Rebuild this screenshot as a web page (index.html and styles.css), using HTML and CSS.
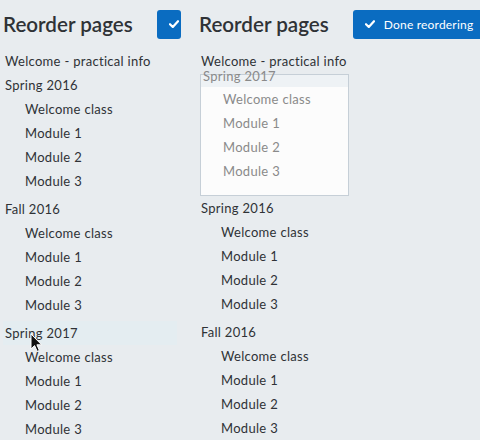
FILE: index.html
```html
<!DOCTYPE html>
<html lang="en">
<head>
<meta charset="utf-8">
<title>Reorder pages</title>
<link rel="stylesheet" href="styles.css">
</head>
<body>
<div class="stage">
  <section class="panel panel-left">
    <header class="bar">
      <h1 class="title">Reorder pages</h1>
      <button class="done" type="button"><svg class="check" viewBox="0 0 10 8" width="10" height="8" aria-hidden="true"><path d="M1 4.2 L3.8 7 L9 1.2" fill="none" stroke="#fff" stroke-width="2.2" stroke-linecap="round" stroke-linejoin="round"/></svg><span class="done-label">Done reordering</span></button>
    </header>
    <ul class="pages">
      <li class="page">Welcome - practical info</li>
      <li class="group">
        <div class="page">Spring 2016</div>
        <ul class="children">
          <li class="child">Welcome class</li>
          <li class="child">Module 1</li>
          <li class="child">Module 2</li>
          <li class="child">Module 3</li>
        </ul>
      </li>
      <li class="group">
        <div class="page">Fall 2016</div>
        <ul class="children">
          <li class="child">Welcome class</li>
          <li class="child">Module 1</li>
          <li class="child">Module 2</li>
          <li class="child">Module 3</li>
        </ul>
      </li>
      <li class="group">
        <div class="page is-hover">Spring 2017<svg class="cursor" viewBox="0 0 13 20" width="13" height="20" aria-hidden="true"><path d="M1 1 L1 16 L4.6 12.6 L7.2 18.4 L9.4 17.4 L6.9 11.8 L11.6 11.8 Z" fill="#111" stroke="#fff" stroke-width="1" stroke-linejoin="round"/></svg></div>
        <ul class="children">
          <li class="child">Welcome class</li>
          <li class="child">Module 1</li>
          <li class="child">Module 2</li>
          <li class="child">Module 3</li>
        </ul>
      </li>
    </ul>
  </section>

  <section class="panel panel-right">
    <header class="bar">
      <h1 class="title">Reorder pages</h1>
      <button class="done" type="button"><svg class="check" viewBox="0 0 10 8" width="10" height="8" aria-hidden="true"><path d="M1 4.2 L3.8 7 L9 1.2" fill="none" stroke="#fff" stroke-width="2.2" stroke-linecap="round" stroke-linejoin="round"/></svg><span class="done-label">Done reordering</span></button>
    </header>
    <ul class="pages">
      <li class="page">Welcome - practical info</li>
      <li class="group dragging">
        <div class="drag-head"><span class="drag-title">Spring 2017</span></div>
        <ul class="children">
          <li class="child">Welcome class</li>
          <li class="child">Module 1</li>
          <li class="child">Module 2</li>
          <li class="child">Module 3</li>
        </ul>
      </li>
      <li class="group">
        <div class="page">Spring 2016</div>
        <ul class="children">
          <li class="child">Welcome class</li>
          <li class="child">Module 1</li>
          <li class="child">Module 2</li>
          <li class="child">Module 3</li>
        </ul>
      </li>
      <li class="group">
        <div class="page">Fall 2016</div>
        <ul class="children">
          <li class="child">Welcome class</li>
          <li class="child">Module 1</li>
          <li class="child">Module 2</li>
          <li class="child">Module 3</li>
        </ul>
      </li>
    </ul>
  </section>
</div>
</body>
</html>
```
FILE: styles.css
```css
* { box-sizing: border-box; }

html, body {
  margin: 0;
  padding: 0;
  background: #e8ecef;
}

body {
  font-family: Lato, "Noto Sans", "DejaVu Sans", sans-serif;
  color: #2f3236;
  font-size: 13px;
  letter-spacing: 0.3px;
  width: 480px;
  height: 440px;
  overflow: hidden;
}

.stage {
  display: flex;
  gap: 15px;
  height: 440px;
}

.panel {
  flex: none;
  padding: 0 4px 0 3px;
  overflow: hidden;
}

.panel-left { width: 181px; }
.panel-right { width: 284px; overflow: visible; }

.bar {
  display: flex;
  align-items: center;
  gap: 24px;
  height: 49px;
  padding-bottom: 1px;
}

.title {
  margin: 0;
  font-size: 20.6px;
  font-weight: 600;
  letter-spacing: 0;
  line-height: 24px;
  white-space: nowrap;
  color: #2f3236;
}

.done {
  flex: none;
  display: flex;
  align-items: center;
  gap: 9px;
  height: 29px;
  padding: 0 12px;
  border: 0;
  border-radius: 3px;
  background: #0a6cc1;
  color: #fff;
  font-family: inherit;
  font-size: 12px;
  letter-spacing: 0.2px;
  white-space: nowrap;
}

/* the left frame is cropped just past the button's icon */
.panel-left .done { width: 22px; overflow: hidden; }

.check { flex: none; }

.pages, .children {
  list-style: none;
  margin: 0;
  padding: 0;
}

.page {
  position: relative;
  line-height: 24px;
  padding-left: 2px;
  white-space: nowrap;
}

.is-hover { background: #e4edf1; }

.cursor {
  position: absolute;
  left: 27px;
  top: 12px;
}

.group { margin-bottom: 4px; }

.child {
  line-height: 24px;
  padding-left: 22px;
  white-space: nowrap;
}

.dragging {
  width: 149px;
  margin: 1px 0 0 1px;
  border: 1px solid #c6cfd7;
  background: #fcfcfc;
  color: #8a8a8a;
  padding-bottom: 12px;
}

.drag-head {
  display: flow-root;
  height: 12px;
  background: #eef2f5;
}

.drag-title {
  display: block;
  margin-top: -11px;
  line-height: 24px;
  padding-left: 2px;
}

.dragging .child { padding-left: 22px; }
```
